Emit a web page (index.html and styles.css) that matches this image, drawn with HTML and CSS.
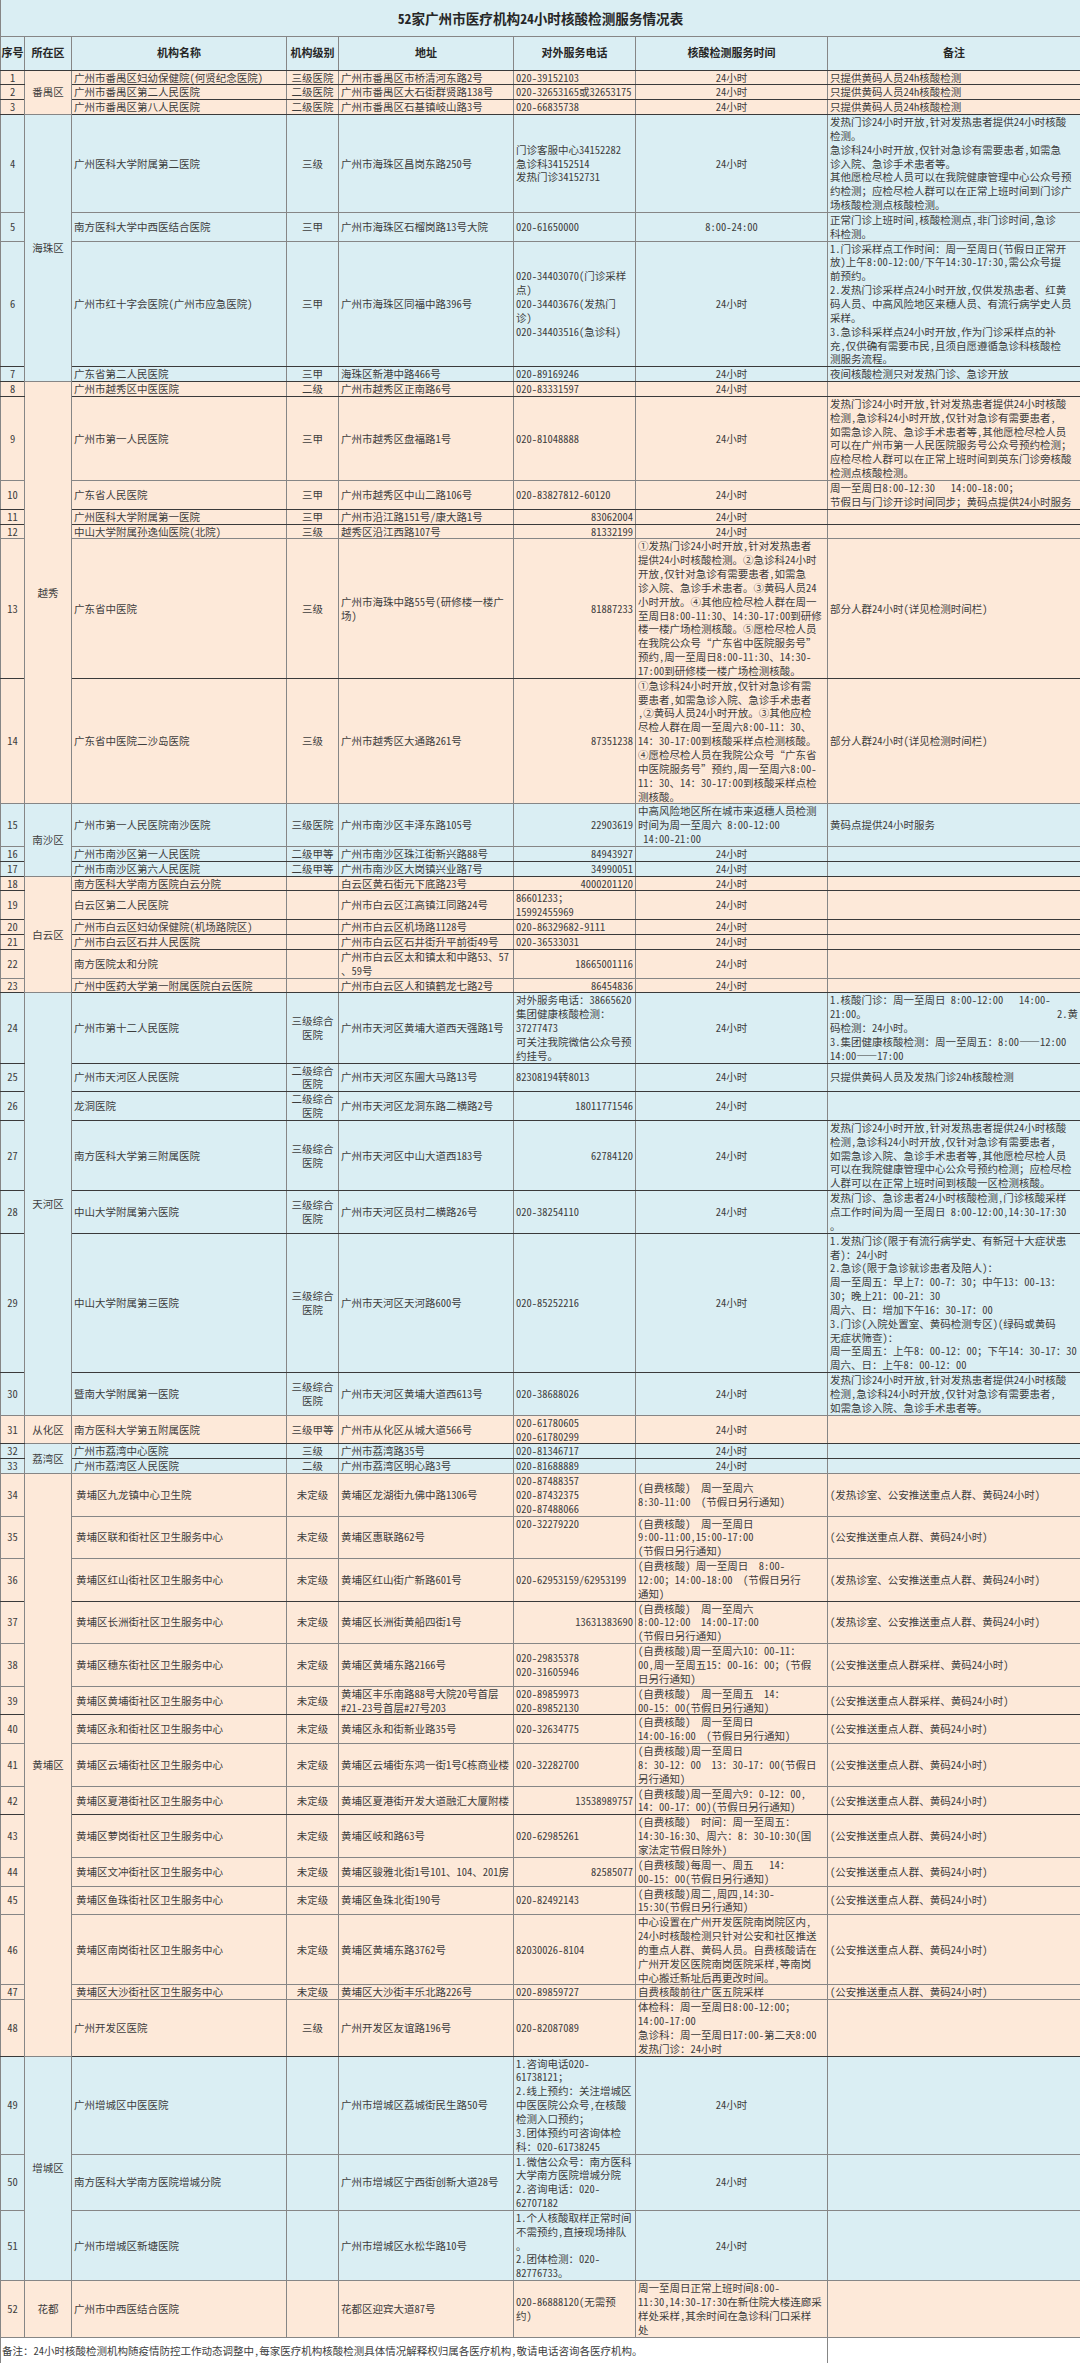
FILE: index.html
```html
<!DOCTYPE html>
<html lang="zh-CN">
<head>
<meta charset="utf-8">
<title>52家广州市医疗机构24小时核酸检测服务情况表</title>
<link rel="stylesheet" href="styles.css">
</head>
<body>
<table class="sheet">
<colgroup>
<col class="w-no"><col class="w-dist"><col class="w-name"><col class="w-lvl"><col class="w-addr"><col class="w-tel"><col class="w-time"><col class="w-note">
</colgroup>
<tbody>
<tr class="title"><td colspan="8">52家广州市医疗机构24小时核酸检测服务情况表</td></tr>
<tr class="head db"><th>序号</th><th>所在区</th><th>机构名称</th><th>机构级别</th><th>地址</th><th>对外服务电话</th><th>核酸检测服务时间</th><th>备注</th></tr>

<tr class="p db"><td class="n">1</td><td class="d" rowspan="3">番禺区</td><td>广州市番禺区妇幼保健院（何贤纪念医院）</td><td class="c">三级医院</td><td>广州市番禺区市桥清河东路2号</td><td>020-39152103</td><td class="c">24小时</td><td>只提供黄码人员24h核酸检测</td></tr>
<tr class="p db"><td class="n">2</td><td>广州市番禺区第二人民医院</td><td class="c">二级医院</td><td>广州市番禺区大石街群贤路138号</td><td>020-32653165或32653175</td><td class="c">24小时</td><td>只提供黄码人员24h核酸检测</td></tr>
<tr class="p db"><td class="n">3</td><td>广州市番禺区第八人民医院</td><td class="c">二级医院</td><td>广州市番禺区石基镇岐山路3号</td><td>020-66835738</td><td class="c">24小时</td><td>只提供黄码人员24h核酸检测</td></tr>

<tr class="b"><td class="n">4</td><td class="d" rowspan="4">海珠区</td><td>广州医科大学附属第二医院</td><td class="c">三级</td><td>广州市海珠区昌岗东路250号</td><td>门诊客服中心34152282<br>急诊科34152514<br>发热门诊34152731</td><td class="c">24小时</td><td>发热门诊24小时开放，针对发热患者提供24小时核酸<br>检测。<br>急诊科24小时开放，仅针对急诊有需要患者，如需急<br>诊入院、急诊手术患者等。<br>其他愿检尽检人员可以在我院健康管理中心公众号预<br>约检测；应检尽检人群可以在正常上班时间到门诊广<br>场核酸检测点核酸检测。</td></tr>
<tr class="b"><td class="n">5</td><td>南方医科大学中西医结合医院</td><td class="c">三甲</td><td>广州市海珠区石榴岗路13号大院</td><td>020-61650000</td><td class="c">8:00-24:00</td><td>正常门诊上班时间，核酸检测点，非门诊时间，急诊<br>科检测。</td></tr>
<tr class="b db"><td class="n">6</td><td>广州市红十字会医院（广州市应急医院）</td><td class="c">三甲</td><td>广州市海珠区同福中路396号</td><td>020-34403070（门诊采样<br>点）<br>020-34403676（发热门<br>诊）<br>020-34403516（急诊科）</td><td class="c">24小时</td><td>1.门诊采样点工作时间：周一至周日（节假日正常开<br>放）上午8:00-12:00/下午14:30-17:30，需公众号提<br>前预约。<br>2.发热门诊采样点24小时开放，仅供发热患者、红黄<br>码人员、中高风险地区来穗人员、有流行病学史人员<br>采样。<br>3.急诊科采样点24小时开放，作为门诊采样点的补<br>充，仅供确有需要市民，且须自愿遵循急诊科核酸检<br>测服务流程。</td></tr>
<tr class="b db"><td class="n">7</td><td>广东省第二人民医院</td><td class="c">三甲</td><td>海珠区新港中路466号</td><td>020-89169246</td><td class="c">24小时</td><td>夜间核酸检测只对发热门诊、急诊开放</td></tr>

<tr class="p db"><td class="n">8</td><td class="d" rowspan="7">越秀</td><td>广州市越秀区中医医院</td><td class="c">二级</td><td>广州市越秀区正南路6号</td><td>020-83331597</td><td class="c">24小时</td><td></td></tr>
<tr class="p"><td class="n">9</td><td>广州市第一人民医院</td><td class="c">三甲</td><td>广州市越秀区盘福路1号</td><td>020-81048888</td><td class="c">24小时</td><td>发热门诊24小时开放，针对发热患者提供24小时核酸<br>检测，急诊科24小时开放，仅针对急诊有需要患者，<br>如需急诊入院、急诊手术患者等，其他愿检尽检人员<br>可以在广州市第一人民医院服务号公众号预约检测；<br>应检尽检人群可以在正常上班时间到英东门诊旁核酸<br>检测点核酸检测。</td></tr>
<tr class="p db"><td class="n">10</td><td>广东省人民医院</td><td class="c">三甲</td><td>广州市越秀区中山二路106号</td><td>020-83827812-60120</td><td class="c">24小时</td><td>周一至周日8:00-12:30　　 14:00-18:00；<br>节假日与门诊开诊时间同步；黄码点提供24小时服务</td></tr>
<tr class="p db"><td class="n">11</td><td>广州医科大学附属第一医院</td><td class="c">三甲</td><td>广州市沿江路151号/康大路1号</td><td class="r">83062004</td><td class="c">24小时</td><td></td></tr>
<tr class="p"><td class="n">12</td><td>中山大学附属孙逸仙医院（北院）</td><td class="c">三级</td><td>越秀区沿江西路107号</td><td class="r">81332199</td><td class="c">24小时</td><td></td></tr>
<tr class="p db"><td class="n">13</td><td>广东省中医院</td><td class="c">三级</td><td>广州市海珠中路55号（研修楼一楼广<br>场）</td><td class="r">81887233</td><td>①发热门诊24小时开放，针对发热患者<br>提供24小时核酸检测。②急诊科24小时<br>开放，仅针对急诊有需要患者，如需急<br>诊入院、急诊手术患者。③黄码人员24<br>小时开放。④其他应检尽检人群在周一<br>至周日8:00-11:30、14:30-17:00到研修<br>楼一楼广场检测核酸。⑤愿检尽检人员<br>在我院公众号“广东省中医院服务号”<br>预约，周一至周日8:00-11:30、14:30-<br>17:00到研修楼一楼广场检测核酸。</td><td>部分人群24小时（详见检测时间栏）</td></tr>
<tr class="p"><td class="n">14</td><td>广东省中医院二沙岛医院</td><td class="c">三级</td><td>广州市越秀区大通路261号</td><td class="r">87351238</td><td>①急诊科24小时开放，仅针对急诊有需<br>要患者，如需急诊入院、急诊手术患者<br>，②黄码人员24小时开放。③其他应检<br>尽检人群在周一至周六8:00-11：30、<br>14：30-17:00到核酸采样点检测核酸。<br>④愿检尽检人员在我院公众号“广东省<br>中医院服务号”预约，周一至周六8:00-<br>11：30、14：30-17:00到核酸采样点检<br>测核酸。</td><td>部分人群24小时（详见检测时间栏）</td></tr>

<tr class="b"><td class="n">15</td><td class="d" rowspan="3">南沙区</td><td>广州市第一人民医院南沙医院</td><td class="c">三级医院</td><td>广州市南沙区丰泽东路105号</td><td class="r">22903619</td><td>中高风险地区所在城市来返穗人员检测<br>时间为周一至周六 8:00-12:00<br>　14:00-21:00</td><td>黄码点提供24小时服务</td></tr>
<tr class="b db"><td class="n">16</td><td>广州市南沙区第一人民医院</td><td class="c">二级甲等</td><td>广州市南沙区珠江街新兴路88号</td><td class="r">84943927</td><td class="c">24小时</td><td></td></tr>
<tr class="b db"><td class="n">17</td><td>广州市南沙区第六人民医院</td><td class="c">二级甲等</td><td>广州市南沙区大岗镇兴业路7号</td><td class="r">34990051</td><td class="c">24小时</td><td></td></tr>

<tr class="p db"><td class="n">18</td><td class="d" rowspan="6">白云区</td><td>南方医科大学南方医院白云分院</td><td></td><td>白云区黄石街元下底路23号</td><td class="r">4000201120</td><td class="c">24小时</td><td></td></tr>
<tr class="p db"><td class="n">19</td><td>白云区第二人民医院</td><td></td><td>广州市白云区江高镇江同路24号</td><td>86601233；<br>15992455969</td><td class="c">24小时</td><td></td></tr>
<tr class="p db"><td class="n">20</td><td>广州市白云区妇幼保健院（机场路院区）</td><td></td><td>广州市白云区机场路1128号</td><td>020-86329682-9111</td><td class="c">24小时</td><td></td></tr>
<tr class="p db"><td class="n">21</td><td>广州市白云区石井人民医院</td><td></td><td>广州市白云区石井街升平前街49号</td><td>020-36533031</td><td class="c">24小时</td><td></td></tr>
<tr class="p"><td class="n">22</td><td>南方医院太和分院</td><td></td><td>广州市白云区太和镇太和中路53、57<br>、59号</td><td class="r">18665001116</td><td class="c">24小时</td><td></td></tr>
<tr class="p db"><td class="n">23</td><td>广州中医药大学第一附属医院白云医院</td><td></td><td>广州市白云区人和镇鹤龙七路2号</td><td class="r">86454836</td><td class="c">24小时</td><td></td></tr>

<tr class="b db"><td class="n">24</td><td class="d" rowspan="7">天河区</td><td>广州市第十二人民医院</td><td class="c">三级综合<br>医院</td><td>广州市天河区黄埔大道西天强路1号</td><td>对外服务电话：38665620<br>集团健康核酸检测：<br>37277473<br>可关注我院微信公众号预<br>约挂号。</td><td class="c">24小时</td><td>1.核酸门诊：周一至周日　8:00-12:00　　　14:00-<div class="sp"><span>21:00。</span><span>2.黄</span></div>码检测：24小时。<br>3.集团健康核酸检测：周一至周五：8:00——12:00<br>14:00——17:00</td></tr>
<tr class="b db"><td class="n">25</td><td>广州市天河区人民医院</td><td class="c">二级综合<br>医院</td><td>广州市天河区东圃大马路13号</td><td>82308194转8013</td><td class="c">24小时</td><td>只提供黄码人员及发热门诊24h核酸检测</td></tr>
<tr class="b db"><td class="n">26</td><td>龙洞医院</td><td class="c">二级综合<br>医院</td><td>广州市天河区龙洞东路二横路2号</td><td class="r">18011771546</td><td class="c">24小时</td><td></td></tr>
<tr class="b db"><td class="n">27</td><td>南方医科大学第三附属医院</td><td class="c">三级综合<br>医院</td><td>广州市天河区中山大道西183号</td><td class="r">62784120</td><td class="c">24小时</td><td>发热门诊24小时开放，针对发热患者提供24小时核酸<br>检测，急诊科24小时开放，仅针对急诊有需要患者，<br>如需急诊入院、急诊手术患者等，其他愿检尽检人员<br>可以在我院健康管理中心公众号预约检测；应检尽检<br>人群可以在正常上班时间到核酸一区检测核酸。</td></tr>
<tr class="b db"><td class="n">28</td><td>中山大学附属第六医院</td><td class="c">三级综合<br>医院</td><td>广州市天河区员村二横路26号</td><td>020-38254110</td><td class="c">24小时</td><td>发热门诊、急诊患者24小时核酸检测，门诊核酸采样<br>点工作时间为周一至周日 8:00-12:00，14:30-17:30<br>。</td></tr>
<tr class="b db"><td class="n">29</td><td>中山大学附属第三医院</td><td class="c">三级综合<br>医院</td><td>广州市天河区天河路600号</td><td>020-85252216</td><td class="c">24小时</td><td>1.发热门诊（限于有流行病学史、有新冠十大症状患<br>者）：24小时<br>2.急诊（限于急诊就诊患者及陪人）：<br>周一至周五：早上7：00-7：30；中午13：00-13：<br>30；晚上21：00-21：30<br>周六、日：增加下午16：30-17：00<br>3.门诊（入院处置室、黄码检测专区）（绿码或黄码<br>无症状筛查）：<br>周一至周五：上午8：00-12：00；下午14：30-17：30<br>周六、日：上午8：00-12：00</td></tr>
<tr class="b"><td class="n">30</td><td>暨南大学附属第一医院</td><td class="c">三级综合<br>医院</td><td>广州市天河区黄埔大道西613号</td><td>020-38688026</td><td class="c">24小时</td><td>发热门诊24小时开放，针对发热患者提供24小时核酸<br>检测，急诊科24小时开放，仅针对急诊有需要患者，<br>如需急诊入院、急诊手术患者等。</td></tr>

<tr class="p db"><td class="n">31</td><td class="d">从化区</td><td>南方医科大学第五附属医院</td><td class="c">三级甲等</td><td>广州市从化区从城大道566号</td><td>020-61780605<br>020-61780299</td><td class="c">24小时</td><td></td></tr>

<tr class="b db"><td class="n">32</td><td class="d" rowspan="2">荔湾区</td><td>广州市荔湾中心医院</td><td class="c">三级</td><td>广州市荔湾路35号</td><td>020-81346717</td><td class="c">24小时</td><td></td></tr>
<tr class="b"><td class="n">33</td><td>广州市荔湾区人民医院</td><td class="c">二级</td><td>广州市荔湾区明心路3号</td><td>020-81688889</td><td class="c">24小时</td><td></td></tr>

<tr class="p"><td class="n">34</td><td class="d" rowspan="15">黄埔区</td><td class="in">黄埔区九龙镇中心卫生院</td><td class="c">未定级</td><td>黄埔区龙湖街九佛中路1306号</td><td>020-87488357<br>020-87432375<br>020-87488066</td><td>（自费核酸）　　周一至周六<br>8:30-11:00　　（节假日另行通知）</td><td>（发热诊室、公安推送重点人群、黄码24小时）</td></tr>
<tr class="p"><td class="n">35</td><td class="in">黄埔区联和街社区卫生服务中心</td><td class="c">未定级</td><td>黄埔区惠联路62号</td><td class="t">020-32279220</td><td>（自费核酸）　　周一至周日<br>9:00-11:00,15:00-17:00<br>（节假日另行通知）</td><td>（公安推送重点人群、黄码24小时）</td></tr>
<tr class="p db"><td class="n">36</td><td class="in">黄埔区红山街社区卫生服务中心</td><td class="c">未定级</td><td>黄埔区红山街广新路601号</td><td>020-62953159/62953199</td><td>（自费核酸）　周一至周日　 8:00-<br>12:00；14:00-18:00　　（节假日另行<br>通知）</td><td>（发热诊室、公安推送重点人群、黄码24小时）</td></tr>
<tr class="p"><td class="n">37</td><td class="in">黄埔区长洲街社区卫生服务中心</td><td class="c">未定级</td><td>黄埔区长洲街黄船四街1号</td><td class="r">13631383690</td><td>（自费核酸）　　周一至周六<br>8:00-12:00　 14:00-17:00<br>（节假日另行通知）</td><td>（发热诊室、公安推送重点人群、黄码24小时）</td></tr>
<tr class="p"><td class="n">38</td><td class="in">黄埔区穗东街社区卫生服务中心</td><td class="c">未定级</td><td>黄埔区黄埔东路2166号</td><td>020-29835378<br>020-31605946</td><td>（自费核酸）周一至周六10：00-11：<br>00，周一至周五15：00-16：00；(节假<br>日另行通知)</td><td>（公安推送重点人群采样、黄码24小时）</td></tr>
<tr class="p db"><td class="n">39</td><td class="in">黄埔区黄埔街社区卫生服务中心</td><td class="c">未定级</td><td>黄埔区丰乐南路88号大院20号首层<br>#21-23号首层#27号203</td><td>020-89859973<br>020-89852130</td><td>（自费核酸）　　周一至周五　　14：<br>00-15：00(节假日另行通知)</td><td>（公安推送重点人群采样、黄码24小时）</td></tr>
<tr class="p"><td class="n">40</td><td class="in">黄埔区永和街社区卫生服务中心</td><td class="c">未定级</td><td>黄埔区永和街新业路35号</td><td>020-32634775</td><td>（自费核酸）　　周一至周日<br>14:00-16:00　　（节假日另行通知）</td><td>（公安推送重点人群、黄码24小时）</td></tr>
<tr class="p"><td class="n">41</td><td class="in">黄埔区云埔街社区卫生服务中心</td><td class="c">未定级</td><td>黄埔区云埔街东鸿一街1号C栋商业楼</td><td>020-32282700</td><td>（自费核酸）周一至周日<br>8：30-12：00　 13：30-17：00(节假日<br>另行通知)</td><td>（公安推送重点人群、黄码24小时）</td></tr>
<tr class="p db"><td class="n">42</td><td class="in">黄埔区夏港街社区卫生服务中心</td><td class="c">未定级</td><td>黄埔区夏港街开发大道融汇大厦附楼</td><td class="r">13538989757</td><td>（自费核酸）周一至周六9：0-12：00,<br>14：00-17：00）（节假日另行通知）</td><td>（公安推送重点人群、黄码24小时）</td></tr>
<tr class="p"><td class="n">43</td><td class="in">黄埔区萝岗街社区卫生服务中心</td><td class="c">未定级</td><td>黄埔区岐和路63号</td><td>020-62985261</td><td>（自费核酸）　　时间：周一至周五：<br>14:30-16:30、周六：8：30-10:30（国<br>家法定节假日除外）</td><td>（公安推送重点人群、黄码24小时）</td></tr>
<tr class="p"><td class="n">44</td><td class="in">黄埔区文冲街社区卫生服务中心</td><td class="c">未定级</td><td>黄埔区骏雅北街1号101、104、201房</td><td class="r">82585077</td><td>（自费核酸）每周一、周五　　　14：<br>00-15：00(节假日另行通知)</td><td>（公安推送重点人群、黄码24小时）</td></tr>
<tr class="p"><td class="n">45</td><td class="in">黄埔区鱼珠街社区卫生服务中心</td><td class="c">未定级</td><td>黄埔区鱼珠北街190号</td><td>020-82492143</td><td>（自费核酸）周二，周四，14:30-<br>15:30(节假日另行通知)</td><td>（公安推送重点人群、黄码24小时）</td></tr>
<tr class="p"><td class="n">46</td><td class="in">黄埔区南岗街社区卫生服务中心</td><td class="c">未定级</td><td>黄埔区黄埔东路3762号</td><td>82030026-8104</td><td>中心设置在广州开发医院南岗院区内，<br>24小时核酸检测只针对公安和社区推送<br>的重点人群、黄码人员。自费核酸请在<br>广州开发区医院南岗医院采样，等南岗<br>中心搬迁新址后再更改时间。</td><td>（公安推送重点人群、黄码24小时）</td></tr>
<tr class="p"><td class="n">47</td><td class="in">黄埔区大沙街社区卫生服务中心</td><td class="c">未定级</td><td>黄埔区大沙街丰乐北路226号</td><td>020-89859727</td><td>自费核酸前往广医五院采样</td><td>（公安推送重点人群、黄码24小时）</td></tr>
<tr class="p db"><td class="n">48</td><td>广州开发区医院</td><td class="c">三级</td><td>广州开发区友谊路196号</td><td>020-82087089</td><td>体检科：周一至周日8:00-12:00；<br>14:00-17:00<br>急诊科：周一至周日17:00-第二天8:00<br>发热门诊：24小时</td><td></td></tr>

<tr class="b"><td class="n">49</td><td class="d" rowspan="3">增城区</td><td>广州增城区中医医院</td><td></td><td>广州市增城区荔城街民生路50号</td><td>1.咨询电话020-<br>61738121；<br>2.线上预约：关注增城区<br>中医医院公众号，在核酸<br>检测入口预约；<br>3.团体预约可咨询体检<br>科：020-61738245</td><td class="c">24小时</td><td></td></tr>
<tr class="b"><td class="n">50</td><td>南方医科大学南方医院增城分院</td><td></td><td>广州市增城区宁西街创新大道28号</td><td>1.微信公众号：南方医科<br>大学南方医院增城分院<br>2.咨询电话：020-<br>62707182</td><td class="c">24小时</td><td></td></tr>
<tr class="b"><td class="n">51</td><td>广州市增城区新塘医院</td><td></td><td>广州市增城区水松华路10号</td><td>1.个人核酸取样正常时间<br>不需预约，直接现场排队<br>。<br>2.团体检测：020-<br>82776733。</td><td class="c">24小时</td><td></td></tr>

<tr class="p"><td class="n">52</td><td class="d">花都</td><td>广州市中西医结合医院</td><td></td><td>花都区迎宾大道87号</td><td>020-86888120（无需预<br>约）</td><td>周一至周日正常上班时间8:00-<br>11:30,14:30-17:30在新住院大楼连廊采<br>样处采样，其余时间在急诊科门口采样<br>处</td><td></td></tr>

<tr class="foot"><td colspan="7">备注：24小时核酸检测机构随疫情防控工作动态调整中，每家医疗机构核酸检测具体情况解释权归属各医疗机构，敬请电话咨询各医疗机构。</td><td></td></tr>
</tbody>
</table>
</body>
</html>
```

FILE: styles.css
```css
* {
  box-sizing: border-box;
}

html,
body {
  margin: 0;
  padding: 0;
  background: #ffffff;
}

body {
  font-family: "Noto Sans CJK SC", sans-serif;
  font-feature-settings: "hwid" 1;
  font-size: 10.5px;
  line-height: 13.84px;
  color: #3d3d3d;
}

.sheet {
  width: 1080px;
  border-collapse: collapse;
  table-layout: fixed;
}

.w-no { width: 24px; }
.w-dist { width: 47px; }
.w-name { width: 215px; }
.w-lvl { width: 52px; }
.w-addr { width: 175px; }
.w-tel { width: 122px; }
.w-time { width: 192px; }
.w-note { width: 253px; }

.sheet td,
.sheet th {
  border: 1px solid #868686;
  padding: 0 2px;
  white-space: nowrap;
  vertical-align: middle;
  text-align: left;
  font-weight: normal;
  line-height: 13.84px;
}

.sheet .title td {
  height: 36px;
  background: #daeef3;
  border-top: 0;
  font-size: 13.6px;
  font-weight: bold;
  text-align: center;
  color: #262626;
  padding-top: 3px;
}

.sheet .head th {
  height: 34px;
  background: #daeef3;
  font-size: 11px;
  font-weight: bold;
  text-align: center;
  color: #262626;
  padding: 0;
}

.b td {
  background: #daeef3;
}

.p td {
  background: #fde9d9;
}

.sheet .db > td:not(.d),
.sheet .db > th {
  border-bottom-color: #3a3a3a;
}

.sheet .n,
.sheet .d,
.sheet .c {
  text-align: center;
}

.sheet .n {
  padding: 0;
}

.sheet .r {
  text-align: right;
}

.sheet .t {
  vertical-align: top;
}

.sheet .in {
  padding-left: 4px;
}

.sheet .foot td {
  height: 27px;
  background: #ffffff;
  padding-left: 1px;
}

.sp {
  display: flex;
  justify-content: space-between;
}
```
